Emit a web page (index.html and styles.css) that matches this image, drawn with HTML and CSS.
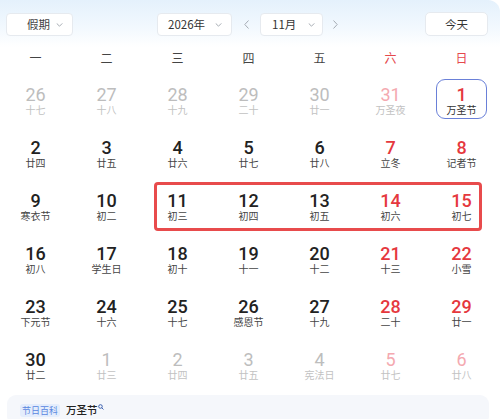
FILE: index.html
```html
<!DOCTYPE html>
<html lang="zh">
<head>
<meta charset="utf-8">
<link rel="stylesheet" href="styles.css">
</head>
<body>
<div class="page">
  <div class="topbar">
    <div class="select sel-holiday"><span>假期</span><svg class="chev" viewBox="0 0 8 5"><path d="M0.5 0.5 L4 4 L7.5 0.5"/></svg></div>
    <div class="select sel-year"><span>2026年</span><svg class="chev" viewBox="0 0 8 5"><path d="M0.5 0.5 L4 4 L7.5 0.5"/></svg></div>
    <div class="arrow"><svg viewBox="0 0 5 9"><path d="M4.5 0.5 L0.8 4.5 L4.5 8.5"/></svg></div>
    <div class="select sel-month"><span>11月</span><svg class="chev" viewBox="0 0 8 5"><path d="M0.5 0.5 L4 4 L7.5 0.5"/></svg></div>
    <div class="arrow arrow-next"><svg viewBox="0 0 5 9"><path d="M0.5 0.5 L4.2 4.5 L0.5 8.5"/></svg></div>
    <div class="today">今天</div>
  </div>

  <div class="weekdays">
    <span>一</span><span>二</span><span>三</span><span>四</span><span>五</span><span class="we">六</span><span class="we">日</span>
  </div>

  <div class="grid">
    <div class="cell other"><div class="box"><b>26</b><i>十七</i></div></div>
    <div class="cell other"><div class="box"><b>27</b><i>十八</i></div></div>
    <div class="cell other"><div class="box"><b>28</b><i>十九</i></div></div>
    <div class="cell other"><div class="box"><b>29</b><i>二十</i></div></div>
    <div class="cell other"><div class="box"><b>30</b><i>廿一</i></div></div>
    <div class="cell other red"><div class="box"><b>31</b><i>万圣夜</i></div></div>
    <div class="cell red selected"><div class="box"><b>1</b><i>万圣节</i></div></div>

    <div class="cell"><div class="box"><b>2</b><i>廿四</i></div></div>
    <div class="cell"><div class="box"><b>3</b><i>廿五</i></div></div>
    <div class="cell"><div class="box"><b>4</b><i>廿六</i></div></div>
    <div class="cell"><div class="box"><b>5</b><i>廿七</i></div></div>
    <div class="cell"><div class="box"><b>6</b><i>廿八</i></div></div>
    <div class="cell red"><div class="box"><b>7</b><i>立冬</i></div></div>
    <div class="cell red"><div class="box"><b>8</b><i>记者节</i></div></div>

    <div class="cell"><div class="box"><b>9</b><i>寒衣节</i></div></div>
    <div class="cell"><div class="box"><b>10</b><i>初二</i></div></div>
    <div class="cell"><div class="box"><b>11</b><i>初三</i></div></div>
    <div class="cell"><div class="box"><b>12</b><i>初四</i></div></div>
    <div class="cell"><div class="box"><b>13</b><i>初五</i></div></div>
    <div class="cell red"><div class="box"><b>14</b><i>初六</i></div></div>
    <div class="cell red"><div class="box"><b>15</b><i>初七</i></div></div>

    <div class="cell"><div class="box"><b>16</b><i>初八</i></div></div>
    <div class="cell"><div class="box"><b>17</b><i>学生日</i></div></div>
    <div class="cell"><div class="box"><b>18</b><i>初十</i></div></div>
    <div class="cell"><div class="box"><b>19</b><i>十一</i></div></div>
    <div class="cell"><div class="box"><b>20</b><i>十二</i></div></div>
    <div class="cell red"><div class="box"><b>21</b><i>十三</i></div></div>
    <div class="cell red"><div class="box"><b>22</b><i>小雪</i></div></div>

    <div class="cell"><div class="box"><b>23</b><i>下元节</i></div></div>
    <div class="cell"><div class="box"><b>24</b><i>十六</i></div></div>
    <div class="cell"><div class="box"><b>25</b><i>十七</i></div></div>
    <div class="cell"><div class="box"><b>26</b><i>感恩节</i></div></div>
    <div class="cell"><div class="box"><b>27</b><i>十九</i></div></div>
    <div class="cell red"><div class="box"><b>28</b><i>二十</i></div></div>
    <div class="cell red"><div class="box"><b>29</b><i>廿一</i></div></div>

    <div class="cell"><div class="box"><b>30</b><i>廿二</i></div></div>
    <div class="cell other"><div class="box"><b>1</b><i>廿三</i></div></div>
    <div class="cell other"><div class="box"><b>2</b><i>廿四</i></div></div>
    <div class="cell other"><div class="box"><b>3</b><i>廿五</i></div></div>
    <div class="cell other"><div class="box"><b>4</b><i>宪法日</i></div></div>
    <div class="cell other red"><div class="box"><b>5</b><i>廿七</i></div></div>
    <div class="cell other red"><div class="box"><b>6</b><i>廿八</i></div></div>

    <div class="highlight"></div>
  </div>

  <div class="footer">
    <span class="tag">节日百科</span>
    <span class="fest">万圣节</span>
    <svg class="search" viewBox="0 0 8 8"><circle cx="3.3" cy="3.3" r="2.4"/><path d="M5 5 L7.3 7.3"/></svg>
  </div>
</div>
</body>
</html>
```

FILE: styles.css
```css
html, body {
  margin: 0;
  padding: 0;
  background: #ffffff;
}

body {
  font-family: "Noto Sans CJK SC", "Noto Sans", sans-serif;
  color: #222;
  width: 500px;
  height: 419px;
  overflow: hidden;
}

.page {
  width: 500px;
}

.topbar {
  height: 47px;
  box-sizing: border-box;
  padding: 13px 12px 0 6px;
  display: flex;
  align-items: flex-start;
  background: linear-gradient(180deg, #e4f1fc 0%, #f1f8fe 55%, #ffffff 100%);
  border-top-right-radius: 12px;
}

.select {
  height: 23px;
  box-sizing: border-box;
  background: #fff;
  border: 1px solid #e6eaef;
  border-radius: 4px;
  display: flex;
  align-items: center;
  justify-content: space-between;
  font-size: 11.5px;
  color: #333;
  line-height: 1;
}

.chev {
  width: 7px;
  height: 4px;
  fill: none;
  stroke: #9aa0a8;
  stroke-width: 1.1;
}

.sel-holiday {
  width: 67px;
  padding: 0 9px 0 20px;
  color: #444;
}

.sel-year {
  width: 75px;
  margin-left: 84px;
  padding: 0 9px 0 10px;
}

.sel-month {
  width: 63px;
  padding: 0 7px 0 11px;
}

.arrow {
  width: 28px;
  height: 23px;
  display: flex;
  align-items: center;
  justify-content: center;
}

.arrow svg {
  width: 5px;
  height: 9px;
  fill: none;
  stroke: #a5abb3;
  stroke-width: 1;
}

.arrow-next {
  width: 24px;
}

.today {
  margin-left: auto;
  margin-top: -1px;
  width: 63px;
  height: 24px;
  box-sizing: border-box;
  background: #fff;
  border: 1px solid #e6eaef;
  border-radius: 5px;
  display: flex;
  align-items: center;
  justify-content: center;
  font-size: 11.5px;
  color: #333;
}

.weekdays {
  display: grid;
  grid-template-columns: repeat(7, 71px);
  height: 20px;
  align-items: center;
  font-size: 12px;
  color: #444;
  text-align: center;
}

.weekdays .we {
  color: #e5484d;
}

.grid {
  position: relative;
  margin-top: 5px;
  display: grid;
  grid-template-columns: repeat(7, 71px);
  grid-auto-rows: 53px;
}

.cell {
  display: flex;
  align-items: center;
  justify-content: center;
}

.box {
  width: 51px;
  height: 40px;
  box-sizing: border-box;
  border: 1.5px solid transparent;
  border-radius: 9px;
  display: flex;
  flex-direction: column;
  align-items: center;
  justify-content: center;
  padding-top: 3px;
}

.box b {
  font-family: Roboto, "Noto Sans", sans-serif;
  font-weight: 500;
  font-size: 18px;
  line-height: 19px;
  color: #222;
}

.box i {
  font-style: normal;
  font-size: 10px;
  line-height: 12px;
  color: #444;
  white-space: nowrap;
}

.cell.red .box b {
  color: #e5383e;
}

.cell.other .box b {
  color: #bdbdbd;
  font-weight: 400;
}

.cell.other .box i {
  color: #c2c2c2;
}

.cell.other.red .box b {
  color: #f4a9b0;
}

.cell.selected .box {
  border-color: #6a80d8;
}

.cell.selected .box i {
  color: #333;
}

.highlight {
  position: absolute;
  left: 154px;
  top: 110px;
  width: 328px;
  height: 49px;
  box-sizing: border-box;
  border: 3px solid #e84b4c;
  border-radius: 4px;
  pointer-events: none;
}

.footer {
  margin: 5px 11px 0 7px;
  height: 30px;
  background: #f5f7fb;
  border-radius: 9px;
  display: flex;
  align-items: flex-start;
  padding: 9px 0 0 13px;
  box-sizing: border-box;
}

.tag {
  font-size: 9px;
  line-height: 13px;
  height: 13px;
  padding: 0 2px;
  color: #5a87e0;
  background: #e4edfc;
  border-radius: 3px;
}

.fest {
  margin-left: 6px;
  margin-top: -1px;
  font-size: 10.5px;
  font-weight: 500;
  line-height: 14px;
  color: #222;
}

.search {
  width: 6px;
  height: 6px;
  margin-top: 0;
  margin-left: 0;
  fill: none;
  stroke: #3a5fae;
  stroke-width: 1.3;
}
```
